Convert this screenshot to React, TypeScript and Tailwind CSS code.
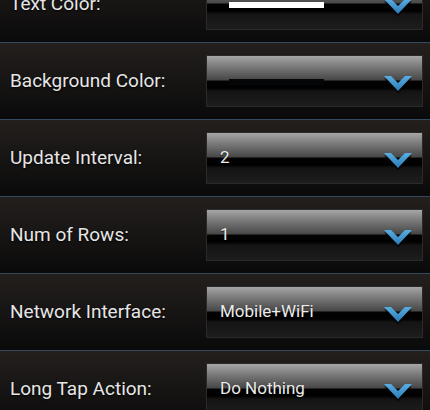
import React from "react";

type Row = { label: string; value?: string; swatch?: string };

const rows: Row[] = [
  { label: "Text Color:", swatch: "#ffffff" },
  { label: "Background Color:", swatch: "#050608" },
  { label: "Update Interval:", value: "2" },
  { label: "Num of Rows:", value: "1" },
  { label: "Network Interface:", value: "Mobile+WiFi" },
  { label: "Long Tap Action:", value: "Do Nothing" },
];

function Chevron() {
  return (
    <svg width="30" height="20" viewBox="0 0 30 20" className="shrink-0">
      <defs>
        <linearGradient id="chev" x1="0" y1="0" x2="0" y2="1">
          <stop offset="0%" stopColor="#58aee4" />
          <stop offset="100%" stopColor="#2b7ab3" />
        </linearGradient>
        <filter id="soft" x="-20%" y="-20%" width="140%" height="160%">
          <feGaussianBlur stdDeviation="0.6" />
        </filter>
      </defs>
      <polygon points="1,3 8,3 15,10 22,3 29,3 15,18" fill="#000" opacity="0.6" filter="url(#soft)" transform="translate(0 1.5)" />
      <polygon points="1,2 8,2 15,9 22,2 29,2 15,17" fill="url(#chev)" filter="url(#soft)" />
    </svg>
  );
}

function Spinner({ value, swatch }: { value?: string; swatch?: string }) {
  return (
    <div className="relative flex h-[52px] w-[217px] items-center border border-[#2a2a2a] bg-[linear-gradient(to_bottom,#a6a6a6_0%,#7c7c7c_20%,#474747_48%,#030303_50%,#000000_64%,#141414_70%,#1d1d1d_100%)] pl-[13px] pr-[9px]">
      {swatch ? (
        <div className="mt-[1px] ml-[9px] h-[6px] w-[95px]" style={{ backgroundColor: swatch }} />
      ) : (
        <span className="text-[17px] text-[#ececec] [text-shadow:0_1px_1px_rgba(0,0,0,0.8)]">{value}</span>
      )}
      <div className="ml-auto mt-[5px]">
        <Chevron />
      </div>
    </div>
  );
}

export default function App() {
  return (
    <div className="h-[410px] w-[430px] overflow-hidden bg-[#0b0a0a] font-['Roboto',sans-serif]">
      <div className="-mt-[35px]">
        {rows.map((r) => (
          <div
            key={r.label}
            className="flex h-[77px] items-center border-t border-[#34495f] bg-[linear-gradient(to_bottom,#231f1d_0%,#171514_50%,#0a0a0a_100%)] pl-[10px]"
          >
            <div className="w-[196px] text-[19px] text-[#e6e6e6] [text-shadow:0_1px_2px_rgba(0,0,0,0.9)]">
              {r.label}
            </div>
            <Spinner value={r.value} swatch={r.swatch} />
          </div>
        ))}
      </div>
    </div>
  );
}
